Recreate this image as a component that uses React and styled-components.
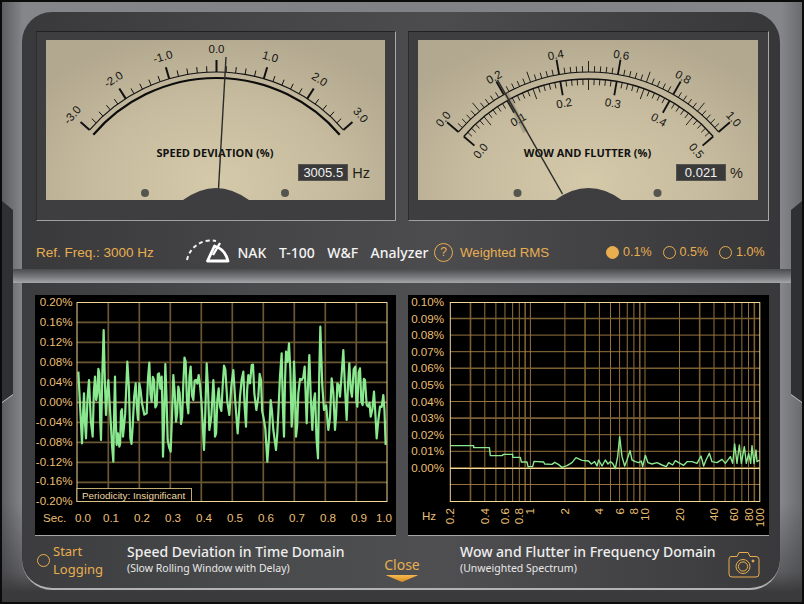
import React from "react";
import styled, { createGlobalStyle } from "styled-components";

const GlobalStyle = createGlobalStyle`
  html, body { margin: 0; padding: 0; background: #0b0b0c; overflow: hidden; }
  * { box-sizing: border-box; }
`;

const ORANGE = "#e8ae50";

const polar = (cx, cy, r, deg) => {
  const a = (deg * Math.PI) / 180;
  return [cx + r * Math.sin(a), cy - r * Math.cos(a)];
};

const tickProps = (cx, cy, r1, r2, deg) => {
  const [x1, y1] = polar(cx, cy, r1, deg);
  const [x2, y2] = polar(cx, cy, r2, deg);
  return { x1, y1, x2, y2 };
};

const arcPath = (cx, cy, r, deg) => {
  const [x1, y1] = polar(cx, cy, r, -deg);
  const [x2, y2] = polar(cx, cy, r, deg);
  return `M${x1} ${y1} A${r} ${r} 0 0 1 ${x2} ${y2}`;
};

function DialLabel({ cx, cy, r, deg, children }) {
  const [x, y] = polar(cx, cy, r, deg);
  return (
    <ScaleText x={x} y={y} textAnchor="middle" dominantBaseline="middle" transform={`rotate(${deg} ${x} ${y})`}>
      {children}
    </ScaleText>
  );
}

function SpeedDial() {
  const cx = 216.5;
  const cy = 240;
  const ticks = [];
  for (let i = -15; i <= 15; i++) {
    const major = i % 5 === 0;
    ticks.push(<line key={i} {...tickProps(cx, cy, 168, major ? 180 : 174, i * 3.27)} stroke="#111" strokeWidth={major ? 2 : 1} />);
  }
  return (
    <DialSvg viewBox="46 40 339 160">
      <path d={arcPath(cx, cy, 168, 49)} fill="none" stroke="#111" strokeWidth="1.1" />
      <path d={arcPath(cx, cy, 162, 49.5)} fill="none" stroke="#0c0c0c" strokeWidth="2.2" />
      {ticks}
      {["-3.0", "-2.0", "-1.0", "0.0", "1.0", "2.0", "3.0"].map((t, i) => (
        <DialLabel key={t} cx={cx} cy={cy} r={190} deg={(i - 3) * 16.35}>{t}</DialLabel>
      ))}
      <DialTitle x={215} y={154} textAnchor="middle" dominantBaseline="middle">SPEED DEVIATION (%)</DialTitle>
      <Screw cx={145} cy={193} r={4} />
      <Screw cx={285} cy={193} r={4} />
      <line x1="218.5" y1="189" x2="226" y2="57" stroke="#2b2b29" strokeWidth="1.4" />
      <Hub d="M183 200 Q200 188 216 188 Q232 188 249 200 Z" />
    </DialSvg>
  );
}

function WowDial() {
  const cx = 589;
  const cy = 243;
  const upper = [];
  const lower = [];
  for (let i = 0; i <= 50; i++) {
    const major = i % 10 === 0;
    const mid = i % 5 === 0;
    const deg = (i - 25) * 1.98;
    upper.push(<line key={i} {...tickProps(cx, cy, 171, 171 + (major ? 15 : mid ? 11 : 6), deg)} stroke="#111" strokeWidth={major ? 1.8 : 0.9} />);
    lower.push(<line key={i} {...tickProps(cx, cy, 164, 164 - (major ? 14 : mid ? 11 : 6), deg)} stroke="#111" strokeWidth={major ? 1.8 : 0.9} />);
  }
  return (
    <DialSvg viewBox="419 40 339 160">
      <path d={arcPath(cx, cy, 171, 49.5)} fill="none" stroke="#111" strokeWidth="1.1" />
      <path d={arcPath(cx, cy, 164, 49.5)} fill="none" stroke="#111" strokeWidth="1.3" />
      {upper}
      {lower}
      {["0.0", "0.2", "0.4", "0.6", "0.8", "1.0"].map((t, i) => (
        <DialLabel key={t} cx={cx} cy={cy} r={190} deg={(i - 2.5) * 19.8}>{t}</DialLabel>
      ))}
      {["0.0", "0.1", "0.2", "0.3", "0.4", "0.5"].map((t, i) => (
        <DialLabel key={t} cx={cx} cy={cy} r={141} deg={(i - 2.5) * 19.8}>{t}</DialLabel>
      ))}
      <DialTitle x={588} y={154} textAnchor="middle" dominantBaseline="middle">WOW AND FLUTTER (%)</DialTitle>
      <Screw cx={518} cy={193} r={4} />
      <Screw cx={658} cy={193} r={4} />
      <line x1="506" y1="92" x2="526" y2="132" stroke="#6f6a5c" strokeWidth="5" opacity="0.35" />
      <line x1="563" y1="194" x2="498" y2="80" stroke="#2b2b29" strokeWidth="1.5" />
      <Hub d="M556 200 Q572 188 589 188 Q606 188 622 200 Z" />
    </DialSvg>
  );
}

function Logo() {
  return (
    <svg width="46" height="28" viewBox="184 233 46 28">
      <path d="M186 255 Q189 241 204 236 Q210 235 215 236" fill="none" stroke="#f2f2f2" strokeWidth="2" strokeDasharray="4 3" />
      <path d="M206.5 256 L213.5 241 Q224 244 227 256 Z" fill="none" stroke="#fff" strokeWidth="2.8" strokeLinejoin="round" />
      <path d="M212 250 L219 238" stroke="#fff" strokeWidth="2.4" />
    </svg>
  );
}

function CameraIcon() {
  return (
    <svg width="32" height="27" viewBox="0 0 32 27" fill="none" stroke={ORANGE} strokeWidth="1">
      <path d="M3 5.5 H9 L11 1.5 H20 L22 5.5 H28 Q31 5.5 31 8.5 V23 Q31 26 28 26 H4 Q1 26 1 23 V8.5 Q1 5.5 3 5.5 Z" />
      <circle cx="15" cy="15.5" r="7" />
      <circle cx="15" cy="15.5" r="4.6" />
      <circle cx="25" cy="10" r="1" fill={ORANGE} />
    </svg>
  );
}

const timeTrace = [
  235, 275, 246, 490, 252, 340, 258, 475, 267, 300, 278, 470, 285, 290, 292, 340, 298, 280, 303, 480, 311, 150, 318, 405,
  325, 300, 333, 440, 340, 545, 345, 290, 350, 495, 358, 500, 363, 395, 369, 470, 382, 245, 391, 475, 398, 440, 407, 310,
  414, 420, 418, 310, 426, 370, 440, 400, 448, 248, 455, 365, 462, 300, 470, 375, 477, 280, 485, 290, 489, 530, 496, 252,
  503, 480, 512, 515, 520, 285, 528, 425, 535, 320, 543, 432, 550, 310, 557, 245, 565, 400, 572, 260, 580, 360, 588, 300,
  596, 285, 604, 360, 612, 510, 620, 250, 628, 450, 640, 300, 645, 470, 652, 360, 660, 380, 668, 320, 676, 268, 688, 405,
  700, 270, 713, 460, 720, 350, 730, 275, 738, 440, 745, 285, 755, 255, 763, 340, 775, 350, 783, 300, 790, 410, 802, 545,
  812, 360, 820, 450, 828, 510, 835, 400, 845, 220, 852, 470, 858, 215, 867, 190, 875, 440, 882, 245, 888, 470, 895, 340,
  905, 300, 914, 260, 920, 430, 928, 225, 937, 450, 945, 340, 954, 535, 961, 140, 972, 390, 985, 450, 995, 295, 1005, 450,
  1012, 310, 1020, 350, 1030, 210, 1040, 420, 1048, 250, 1056, 350, 1066, 260, 1072, 380, 1080, 265, 1088, 375, 1095, 300,
  1105, 380, 1112, 410, 1122, 335, 1130, 475, 1140, 380, 1150, 345, 1157, 495,
];

const spectrumTrace = [
  145, 497, 215, 497, 215, 503, 262, 503, 265, 527, 300, 527, 305, 523, 332, 523, 332, 532, 355, 532, 358, 546, 375, 546,
  378, 560, 392, 560, 396, 544, 425, 546, 428, 552, 450, 553, 458, 547, 470, 554, 480, 562, 495, 557, 510, 548, 522, 533,
  540, 541, 560, 543, 568, 552, 578, 545, 585, 558, 590, 540, 600, 558, 610, 540, 618, 552, 625, 545, 632, 550, 640, 566,
  647, 530, 653, 470, 660, 530, 668, 558, 675, 540, 684, 512, 690, 540, 700, 545, 710, 548, 718, 543, 722, 560, 730, 526,
  738, 548, 750, 552, 765, 548, 780, 555, 793, 560, 800, 548, 812, 555, 820, 542, 830, 548, 845, 556, 855, 545, 870, 545,
  885, 550, 897, 528, 905, 558, 912, 540, 922, 520, 930, 545, 945, 548, 960, 538, 970, 550, 985, 530, 992, 550, 998, 492,
  1005, 550, 1012, 495, 1018, 550, 1027, 500, 1033, 550, 1040, 520, 1046, 550, 1050, 497, 1056, 550, 1062, 510, 1065, 545, 1073, 540,
];

// traces were read off a 3x crop, so divide back down to page pixels
const tracePoints = (trace, originX, originY) => {
  const pts = [];
  for (let i = 0; i < trace.length; i += 2) {
    pts.push(`${originX + trace[i] / 3},${originY + trace[i + 1] / 3}`);
  }
  return pts.join(" ");
};

// the real trace is busier than the peaks above, put a small wiggle between them
const roughen = (trace) => {
  const out = [];
  for (let i = 0; i < trace.length - 2; i += 2) {
    const midX = (trace[i] + trace[i + 2]) / 2;
    const midY = (trace[i + 1] + trace[i + 3]) / 2;
    out.push(trace[i], trace[i + 1], midX, midY + Math.sin(i * 1.7) * 45);
  }
  out.push(trace[trace.length - 2], trace[trace.length - 1]);
  return out;
};

function TimeChart() {
  const yLabels = ["0.20%", "0.16%", "0.12%", "0.08%", "0.04%", "0.00%", "-0.04%", "-0.08%", "-0.12%", "-0.16%", "-0.20%"];
  const xLabels = [["0.0", 83], ["0.1", 111], ["0.2", 142], ["0.3", 173], ["0.4", 204], ["0.5", 235], ["0.6", 266], ["0.7", 297], ["0.8", 328], ["0.9", 359], ["1.0", 384]];
  return (
    <ChartSvg viewBox="35 295 361 240">
      {yLabels.map((t, i) => (
        <AxisText key={t} x={72.5} y={303 + i * 19.93} textAnchor="end" dominantBaseline="middle">{t}</AxisText>
      ))}
      {[...Array(9)].map((_, i) => (
        <GridLine key={i} x1={108.3 + i * 31} y1={302} x2={108.3 + i * 31} y2={501} />
      ))}
      {[...Array(9)].map((_, i) => (
        <GridLine key={i} x1={77} y1={322.3 + i * 20} x2={387} y2={322.3 + i * 20} $zero={i === 4} />
      ))}
      <polyline points={tracePoints(roughen(timeTrace), 0, 280)} fill="none" stroke="#8ae88e" strokeWidth="2.2" strokeLinejoin="round" />
      <PlotFrame x={77} y={302.5} width={310} height={199} />
      <rect x={77} y={488.5} width={114.5} height={13} fill="#000" stroke="#f0d592" strokeWidth="0.8" />
      <BoxText x={82} y={496} dominantBaseline="middle">Periodicity: Insignificant</BoxText>
      <AxisText x={43} y={518.5} dominantBaseline="middle">Sec.</AxisText>
      {xLabels.map(([t, x]) => (
        <AxisText key={t} x={x} y={518.5} textAnchor="middle" dominantBaseline="middle">{t}</AxisText>
      ))}
    </ChartSvg>
  );
}

function FreqChart() {
  const left = 450.3;
  const perDecade = 114.6;
  const fx = (f) => left + Math.log10(f / 0.2) * perDecade;
  const freqs = [0.3, 0.4, 0.5, 0.6, 0.7, 0.8, 0.9, 1, 2, 3, 4, 5, 6, 7, 8, 9, 10, 20, 30, 40, 50, 60, 70, 80, 90];
  const labels = [[0.2, "0.2"], [0.4, "0.4"], [0.6, "0.6"], [0.8, "0.8"], [1, "1"], [2, "2"], [4, "4"], [6, "6"], [8, "8"], [10, "10"], [20, "20"], [40, "40"], [60, "60"], [80, "80"], [100, "100"]];
  const yLabels = ["0.10%", "0.09%", "0.08%", "0.07%", "0.06%", "0.05%", "0.04%", "0.03%", "0.02%", "0.01%", "0.00%"];
  return (
    <ChartSvg viewBox="408 295 361 240">
      {yLabels.map((t, i) => (
        <AxisText key={t} x={444} y={303 + i * 16.6} textAnchor="end" dominantBaseline="middle">{t}</AxisText>
      ))}
      {freqs.map((f) => (
        <LogLine key={f} x1={fx(f)} y1={302} x2={fx(f)} y2={501} $heavy={f === 0.3 || f === 0.9 || f === 3 || f === 9 || f === 30 || f === 90} />
      ))}
      {[...Array(11)].map((_, i) => (
        <LogLine key={i} x1={450} y1={318.5 + i * 16.6} x2={760} y2={318.5 + i * 16.6} $heavy={i % 3 === 0} />
      ))}
      <line x1={450} y1={468.5} x2={760} y2={468.5} stroke="#f5dc9a" strokeWidth="1" />
      <polyline points={tracePoints(spectrumTrace, 402, 280)} fill="none" stroke="#8ae88e" strokeWidth="1.4" strokeLinejoin="round" />
      <PlotFrame x={450.3} y={302.5} width={309.5} height={199} />
      <AxisText x={429} y={516.5} textAnchor="middle" dominantBaseline="middle">Hz</AxisText>
      {labels.map(([f, t]) => (
        <AxisText key={t} x={fx(f) + 1} y={508} textAnchor="end" dominantBaseline="middle" transform={`rotate(-90 ${fx(f) + 1} 508)`}>{t}</AxisText>
      ))}
    </ChartSvg>
  );
}

export default function App() {
  return (
    <>
      <GlobalStyle />
      <Frame>
        <SideNotch />
        <SideNotch $right />
        <TopPanel>
          <Meters>
            <Meter>
              <Face>
                <SpeedDial />
                <Readout>
                  <ReadoutValue>3005.5</ReadoutValue>
                  <ReadoutUnit>Hz</ReadoutUnit>
                </Readout>
              </Face>
            </Meter>
            <Meter>
              <Face>
                <WowDial />
                <Readout>
                  <ReadoutValue>0.021</ReadoutValue>
                  <ReadoutUnit>%</ReadoutUnit>
                </Readout>
              </Face>
            </Meter>
          </Meters>
          <ControlRow>
            <RefFreq>Ref. Freq.: 3000 Hz</RefFreq>
            <Brand>
              <Logo />
              <BrandWord>NAK</BrandWord>
              <BrandWord>T-100</BrandWord>
              <BrandWord>W&amp;F</BrandWord>
              <BrandWord>Analyzer</BrandWord>
            </Brand>
            <HelpButton>?</HelpButton>
            <Weighted>Weighted RMS</Weighted>
            <RangeGroup>
              <RangeItem><RangeDot $on />0.1%</RangeItem>
              <RangeItem><RangeDot />0.5%</RangeItem>
              <RangeItem><RangeDot />1.0%</RangeItem>
            </RangeGroup>
          </ControlRow>
        </TopPanel>
        <MetalBar />
        <BottomPanel>
          <Charts>
            <ChartBox><TimeChart /></ChartBox>
            <ChartBox><FreqChart /></ChartBox>
          </Charts>
          <Footer>
            <Logging>
              <RangeDot />
              <LoggingText>Start<br />Logging</LoggingText>
            </Logging>
            <Caption>
              <CaptionTitle>Speed Deviation in Time Domain</CaptionTitle>
              <CaptionSub>(Slow Rolling Window with Delay)</CaptionSub>
            </Caption>
            <CloseButton>
              Close
              <CloseArrow />
            </CloseButton>
            <Caption $indent>
              <CaptionTitle>Wow and Flutter in Frequency Domain</CaptionTitle>
              <CaptionSub>(Unweighted Spectrum)</CaptionSub>
            </Caption>
            <CameraSlot><CameraIcon /></CameraSlot>
          </Footer>
        </BottomPanel>
      </Frame>
    </>
  );
}

const Frame = styled.div`
  position: relative;
  width: 800px;
  height: 600px;
  margin: 2px;
  padding: 10px 20px 0;
  background:
    linear-gradient(180deg, rgba(58, 58, 60, 0) 500px, rgba(58, 58, 60, 0.55) 570px, #3a3a3c 590px),
    linear-gradient(90deg, #5c5d61 0%, #85868a 2.6%, #808185 50%, #85868a 97.4%, #6a6b6f 100%);
  overflow: hidden;
`;

const SideNotch = styled.div`
  position: absolute;
  top: 199px;
  ${(p) => (p.$right ? "right: 0;" : "left: 0;")}
  width: 11px;
  height: 201px;
  filter: drop-shadow(0 1px 0 #c4c4c6);
  &::before {
    content: "";
    display: block;
    width: 100%;
    height: 100%;
    background: #2f3033;
    clip-path: ${(p) =>
      p.$right
        ? "polygon(0 9px, 100% 0, 100% 100%, 0 193px)"
        : "polygon(0 0, 100% 9px, 100% 193px, 0 100%)"};
  }
`;

const TopPanel = styled.div`
  position: relative;
  width: 758px;
  height: 257px;
  padding: 19px 11px 0 14px;
  border-radius: 30px 30px 0 0;
  background: linear-gradient(90deg, #39393b 0%, #454547 30%, #4c4c4e 55%, #3e3e40 85%, #37373a 100%);
`;

const Meters = styled.div`
  display: grid;
  grid-template-columns: 360px 361px;
  column-gap: 12px;
`;

const Meter = styled.div`
  height: 190px;
  padding: 8px 10px 20px 9px;
  background: #3e3e40;
  border-top: 1px solid #222;
  border-left: 1px solid #2c2c2c;
  border-right: 1px solid #a8a8a8;
  border-bottom: 1.5px solid #a0a0a0;
`;

const Face = styled.div`
  position: relative;
  height: 160px;
  background: radial-gradient(ellipse 65% 95% at 50% 88%, #d4c9a9 0%, #c6bb9e 55%, #b2a88f 100%);
`;

const DialSvg = styled.svg`
  display: block;
  width: 100%;
  height: 100%;
`;

const ScaleText = styled.text`
  font-family: "Liberation Sans", Arial, sans-serif;
  font-size: 11.5px;
  fill: #141412;
`;

const DialTitle = styled.text`
  font-family: "Open Sans", sans-serif;
  font-weight: 700;
  font-size: 11px;
  fill: #111;
`;

const Screw = styled.circle`
  fill: #55554f;
`;

const Hub = styled.path`
  fill: #3e3e40;
`;

const Readout = styled.div`
  position: absolute;
  right: 15px;
  top: 124px;
  display: flex;
  align-items: center;
  gap: 4px;
`;

const ReadoutValue = styled.div`
  width: 50px;
  height: 17px;
  background: #3a3a3b;
  border: 1px solid #55544e;
  color: #f2f2f2;
  font: 13px/15px "Liberation Sans", Arial, sans-serif;
  text-align: center;
`;

const ReadoutUnit = styled.div`
  color: #1f1f1a;
  font: 14.5px "Liberation Sans", Arial, sans-serif;
`;

const ControlRow = styled.div`
  display: flex;
  align-items: center;
  height: 47px;
  padding-top: 15px;
`;

const RefFreq = styled.div`
  width: 149px;
  color: ${ORANGE};
  font: 13.5px "Liberation Sans", Arial, sans-serif;
`;

const Brand = styled.div`
  display: flex;
  align-items: center;
  width: 249px;
  gap: 12.5px;
  color: #f4f4f4;
  svg { margin-right: -6px; }
`;

const BrandWord = styled.span`
  font: 500 14px "Noto Sans", sans-serif;
`;

const HelpButton = styled.div`
  width: 19px;
  height: 19px;
  border: 1px solid ${ORANGE};
  border-radius: 50%;
  color: ${ORANGE};
  font: 12px/17px "Liberation Sans", Arial, sans-serif;
  text-align: center;
`;

const Weighted = styled.div`
  margin-left: 7px;
  width: 146px;
  color: ${ORANGE};
  font: 13.3px "Liberation Sans", Arial, sans-serif;
`;

const RangeGroup = styled.div`
  display: flex;
  gap: 11px;
`;

const RangeItem = styled.div`
  display: flex;
  align-items: center;
  gap: 4px;
  color: ${ORANGE};
  font: 12.5px "Liberation Sans", Arial, sans-serif;
`;

const RangeDot = styled.span`
  flex: none;
  width: 13px;
  height: 13px;
  border-radius: 50%;
  border: 1px solid ${ORANGE};
  background: ${(p) => (p.$on ? ORANGE : "transparent")};
`;

const MetalBar = styled.div`
  width: 780px;
  height: 14px;
  margin-left: -10px;
  background: linear-gradient(180deg, #4a4b4d 0%, #77787b 55%, #a5a6a8 100%);
`;

const BottomPanel = styled.div`
  width: 758px;
  height: 307px;
  padding: 12px 11px 0 13px;
  border-radius: 0 0 30px 30px;
  border-bottom: 2px solid #b3b3b3;
  background: linear-gradient(90deg, #3c3c3e 0%, #484a4b 30%, #4f4f51 55%, #414143 85%, #39393b 100%);
`;

const Charts = styled.div`
  display: grid;
  grid-template-columns: 361px 361px;
  column-gap: 12px;
`;

const ChartBox = styled.div`
  height: 241px;
  background: #000;
  border-bottom: 1px solid #a5a5a5;
`;

const ChartSvg = styled.svg`
  display: block;
  width: 361px;
  height: 240px;
`;

const AxisText = styled.text`
  font-family: "Liberation Sans", Arial, sans-serif;
  font-size: 11.6px;
  fill: #e9bf74;
`;

const BoxText = styled.text`
  font-family: "Liberation Sans", Arial, sans-serif;
  font-size: 9.9px;
  fill: #efd9a2;
`;

const GridLine = styled.line`
  stroke: ${(p) => (p.$zero ? "#a08a62" : "#6b5733")};
  stroke-width: 1.7;
`;

const LogLine = styled.line`
  stroke: ${(p) => (p.$heavy ? "#7c5f33" : "#a57f45")};
  stroke-width: ${(p) => (p.$heavy ? 1.6 : 0.9)};
`;

const PlotFrame = styled.rect`
  fill: none;
  stroke: #f2d793;
  stroke-width: 1;
`;

const Footer = styled.div`
  display: grid;
  grid-template-columns: 90px 250px 50px 1fr auto;
  align-items: start;
  padding: 0 9px 0 2px;
`;

const Logging = styled.div`
  display: flex;
  align-items: center;
  gap: 3px;
  padding-top: 6px;
`;

const LoggingText = styled.div`
  color: ${ORANGE};
  font: 13px/18px "Noto Sans", sans-serif;
`;

const Caption = styled.div`
  padding: 6px 0 0 ${(p) => (p.$indent ? "33px" : "0")};
`;

const CaptionTitle = styled.div`
  color: #eeeeee;
  font: 500 14px/19px "Noto Sans", sans-serif;
  white-space: nowrap;
`;

const CaptionSub = styled.div`
  color: #e8e8e8;
  font: 10.5px/15px "Noto Sans", sans-serif;
  white-space: nowrap;
`;

const CloseButton = styled.div`
  display: flex;
  flex-direction: column;
  align-items: center;
  padding-top: 20px;
  color: ${ORANGE};
  font: 14px/18px "Noto Sans", sans-serif;
`;

const CloseArrow = styled.span`
  width: 33px;
  height: 7px;
  margin-top: 1px;
  background: linear-gradient(180deg, #f5b850, #d98d20);
  clip-path: polygon(0 0, 100% 0, 50% 100%);
`;

const CameraSlot = styled.div`
  padding-top: 15px;
`;
